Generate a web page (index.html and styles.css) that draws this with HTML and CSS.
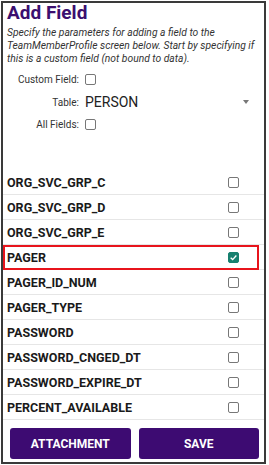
FILE: index.html
```html
<!DOCTYPE html>
<html lang="en">
<head>
  <meta charset="UTF-8" />
  <title>Add Field</title>
  <link rel="stylesheet" href="styles.css">
</head>
<body>
  <div class="frame">
    <h1 class="title">Add Field</h1>
    <p class="intro">Specify the parameters for adding a field to the TeamMemberProfile screen below. Start by specifying if this is a custom field (not bound to data).</p>

    <div class="form">
      <div class="form-row">
        <span class="form-label">Custom Field:</span>
        <span class="box"></span>
      </div>
      <div class="form-row table-row">
        <span class="form-label">Table:</span>
        <span class="select">PERSON <span class="caret"></span></span>
      </div>
      <div class="form-row">
        <span class="form-label">All Fields:</span>
        <span class="box"></span>
      </div>
    </div>

    <div class="field-list" id="field-list"></div>

    <div class="actions">
      <button class="btn">ATTACHMENT</button>
      <button class="btn">SAVE</button>
    </div>
  </div>

  <script>
    const fields = [
      { name: "ORG_SVC_GRP_C" },
      { name: "ORG_SVC_GRP_D" },
      { name: "ORG_SVC_GRP_E" },
      { name: "PAGER", checked: true },
      { name: "PAGER_ID_NUM" },
      { name: "PAGER_TYPE" },
      { name: "PASSWORD" },
      { name: "PASSWORD_CNGED_DT" },
      { name: "PASSWORD_EXPIRE_DT" },
      { name: "PERCENT_AVAILABLE" }
    ];

    const list = document.getElementById('field-list');
    fields.forEach(field => {
      const row = document.createElement('div');
      row.className = `field-row ${field.checked ? 'selected' : ''}`;
      row.innerHTML = `
        <span class="field-name">${field.name}</span>
        <span class="box ${field.checked ? 'checked' : ''}">${field.checked ? '<svg viewBox="0 0 12 12" width="9" height="9"><path d="M2.2 6.3 L4.9 8.8 L9.8 3.4" fill="none" stroke="#fff" stroke-width="1.8"/></svg>' : ''}</span>
      `;
      list.appendChild(row);
    });
  </script>
</body>
</html>
```

FILE: styles.css
```css
* {
  box-sizing: border-box;
}

body {
  margin: 0;
  font-family: Roboto, 'Liberation Sans', sans-serif;
  background-color: #fff;
  color: #222;
}

.frame {
  margin: 1px 3px 0 1px;
  height: 463px;
  border: 2px solid #3a3a3a;
  display: flex;
  flex-direction: column;
}

.title {
  margin: 0;
  padding: 0 0 0 4px;
  font-size: 19px;
  line-height: 20px;
  font-weight: 700;
  color: #3b0f6f;
}

.intro {
  margin: 3px 0 0;
  padding: 0 2px 0 4px;
  font-size: 10.3px;
  line-height: 13px;
  font-style: italic;
  color: #333;
}

/* FORM */
.form {
  margin-top: 3px;
  display: flex;
  flex-direction: column;
}

.form-row {
  display: flex;
  align-items: center;
  height: 23px;
}

.table-row {
  height: 22px;
}

.form-label {
  width: 82px;
  text-align: right;
  padding-right: 6px;
  font-size: 10px;
  color: #333;
}

.select {
  flex: 1;
  display: flex;
  align-items: center;
  justify-content: space-between;
  padding-right: 15px;
  font-size: 14px;
  color: #222;
}

.caret {
  width: 0;
  height: 0;
  border-left: 3.5px solid transparent;
  border-right: 3.5px solid transparent;
  border-top: 4px solid #777;
}

.box {
  width: 11px;
  height: 11px;
  border: 1.5px solid #777;
  border-radius: 2px;
  display: flex;
  align-items: center;
  justify-content: center;
}

.box.checked {
  background-color: #17806f;
  border-color: #17806f;
}

/* FIELD LIST */
.field-list {
  margin-top: 34px;
  display: flex;
  flex-direction: column;
}

.field-row {
  position: relative;
  height: 25px;
  display: flex;
  align-items: center;
  justify-content: space-between;
  padding: 0 25px 0 4px;
  border-bottom: 1px solid #e6e6e6;
}

.field-name {
  font-size: 12.5px;
  font-weight: 700;
  color: #1a1a1a;
}

.selected::after {
  content: '';
  position: absolute;
  left: 0;
  right: 5px;
  top: 0;
  bottom: -1px;
  border: 2px solid #e8141c;
}

/* ACTIONS */
.actions {
  margin-top: 8px;
  padding: 0 5px 0 7px;
  display: grid;
  grid-template-columns: 1fr 1fr;
  gap: 8px;
}

.btn {
  height: 31px;
  border: none;
  border-radius: 3px;
  background-color: #3d0b72;
  color: #fff;
  font-family: Roboto, 'Liberation Sans', sans-serif;
  font-size: 12px;
  font-weight: 700;
}
```
